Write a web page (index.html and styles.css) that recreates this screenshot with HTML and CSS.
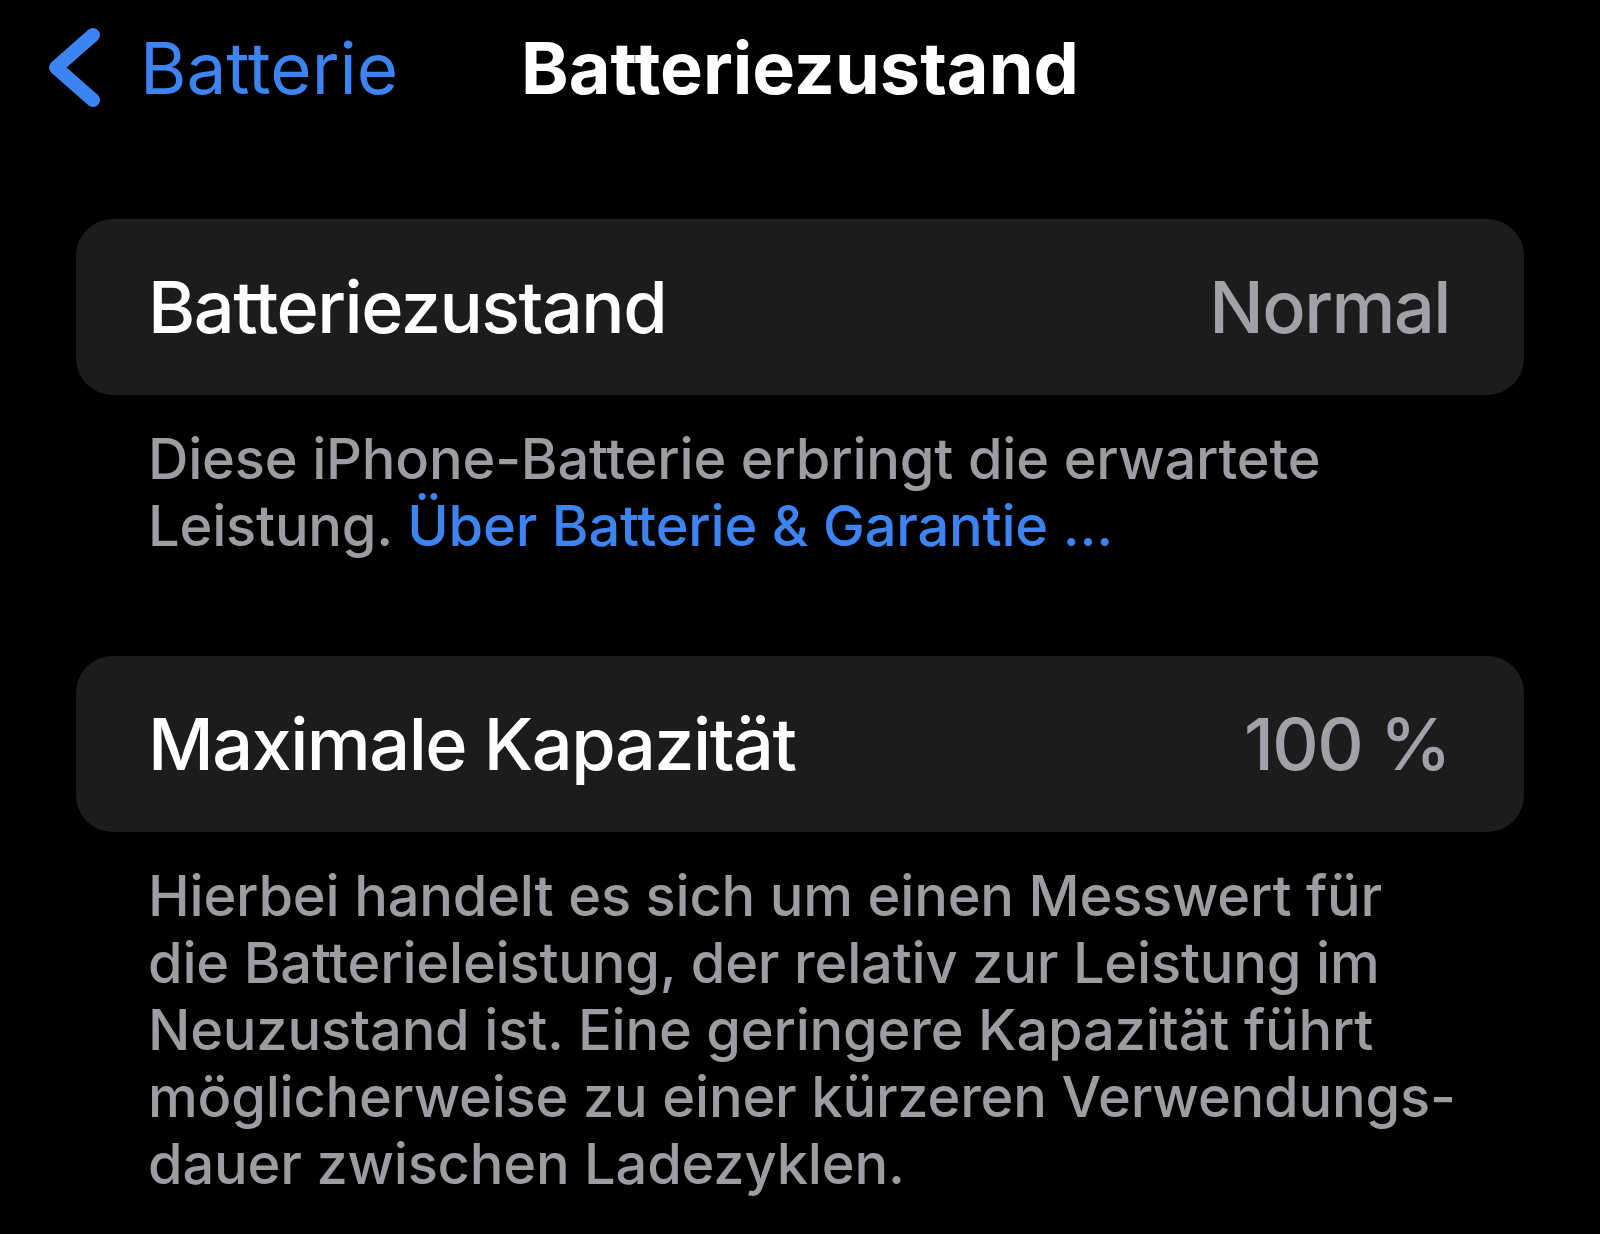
FILE: index.html
```html
<!DOCTYPE html>
<html lang="de">
<head>
<meta charset="utf-8">
<title>Batteriezustand</title>
<link rel="stylesheet" href="styles.css">
</head>
<body>
<header class="nav">
  <a class="back" href="#">
    <svg class="chevron" width="52" height="80" viewBox="0 0 52 80" aria-hidden="true">
      <polyline points="44,7 7,39.5 44,72" fill="none" stroke="#3c84f2" stroke-width="14" stroke-linecap="round" stroke-linejoin="round"/>
    </svg>
    <span class="back-label">Batterie</span>
  </a>
  <h1 class="title">Batteriezustand</h1>
  <div class="spacer"></div>
</header>
<main class="content">
  <section class="group">
    <div class="card">
      <span class="label">Batteriezustand</span>
      <span class="value">Normal</span>
    </div>
    <p class="footer">Diese iPhone-Batterie erbringt die erwartete<br>Leistung. <a class="link" href="#">Über Batterie &amp; Garantie ...</a></p>
  </section>
  <section class="group group-second">
    <div class="card">
      <span class="label">Maximale Kapazität</span>
      <span class="value">100 %</span>
    </div>
    <p class="footer">Hierbei handelt es sich um einen Messwert für<br>die Batterieleistung, der relativ zur Leistung im<br>Neuzustand ist. Eine geringere Kapazität führt<br>möglicherweise zu einer kürzeren Verwendungs-<br>dauer zwischen Ladezyklen.</p>
  </section>
</main>
</body>
</html>
```
FILE: styles.css
```css
html, body {
  margin: 0;
  padding: 0;
  background: #000;
}
body {
  font-family: Inter, "Noto Sans", "Liberation Sans", sans-serif;
  color: #fff;
  width: 1600px;
  height: 1234px;
  overflow: hidden;
}
.nav {
  height: 136px;
  display: grid;
  grid-template-columns: 1fr auto 1fr;
  align-items: center;
  padding-left: 49px;
  padding-right: 49px;
}
.back {
  display: flex;
  align-items: center;
  gap: 39px;
  text-decoration: none;
  color: #3c84f2;
}
.chevron {
  display: block;
  flex: none;
}
.back-label {
  font-size: 71px;
  line-height: 1;
  font-weight: 400;
}
.title {
  margin: 0;
  font-size: 72px;
  line-height: 1;
  font-weight: 700;
  color: #fff;
}
.content {
  padding: 83px 76px 0 76px;
}
.group-second {
  margin-top: 96px;
}
.card {
  height: 176px;
  background: #1c1c1d;
  border-radius: 37px;
  display: flex;
  align-items: center;
  justify-content: space-between;
  padding: 0 74px 0 72px;
}
.label {
  font-size: 72px;
  line-height: 1;
  font-weight: 500;
  letter-spacing: -1.5px;
  color: #fff;
}
.value {
  font-size: 72px;
  line-height: 1;
  font-weight: 500;
  letter-spacing: -1.5px;
  color: #a2a1a7;
}
.footer {
  margin: 0;
  padding: 31px 0 0 72px;
  font-size: 56px;
  line-height: 67px;
  font-weight: 500;
  letter-spacing: -0.2px;
  color: #9c9ca1;
}
.link {
  color: #3c84f2;
  text-decoration: none;
}
```
